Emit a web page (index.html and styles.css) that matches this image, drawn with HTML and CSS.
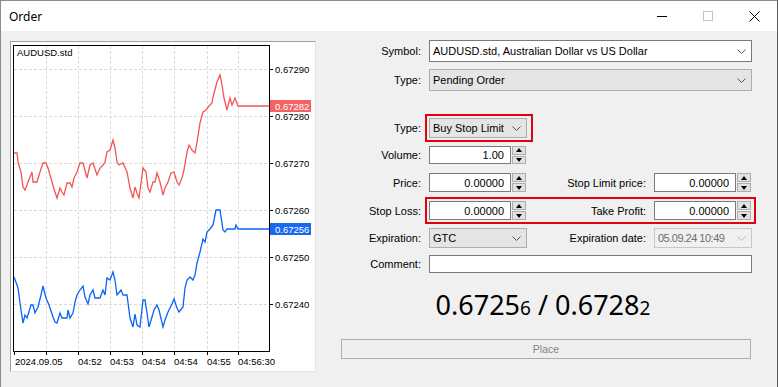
FILE: index.html
```html
<!DOCTYPE html>
<html lang="en">
<head>
    <meta charset="UTF-8">
    <title>Order</title>
    <link rel="stylesheet" href="styles.css">
</head>
<body>
    <div class="window">
        <div class="titlebar">
            <span class="title">Order</span>
            <div class="caption">
                <span><svg width="10" height="10"><line x1="0" y1="5.5" x2="10" y2="5.5" stroke="#000"/></svg></span>
                <span><svg width="10" height="10"><rect x="0.5" y="0.5" width="9" height="9" fill="none" stroke="#c4c4c4"/></svg></span>
                <span><svg width="11" height="11"><path d="M0.5 0.5 L10.5 10.5 M10.5 0.5 L0.5 10.5" stroke="#000" stroke-width="1"/></svg></span>
            </div>
        </div>

        <div class="content">
            <div class="chart">
                <svg width="304" height="329" viewBox="11 42 304 329">
                    <!-- grid -->
                    <g stroke="#dadada" stroke-dasharray="3 2">
                        <line x1="14" y1="69.5" x2="269" y2="69.5"/>
                        <line x1="14" y1="116.5" x2="269" y2="116.5"/>
                        <line x1="14" y1="163.5" x2="269" y2="163.5"/>
                        <line x1="14" y1="210.5" x2="269" y2="210.5"/>
                        <line x1="14" y1="257.5" x2="269" y2="257.5"/>
                        <line x1="14" y1="304.5" x2="269" y2="304.5"/>
                        <line x1="46.5" y1="46" x2="46.5" y2="351"/>
                        <line x1="78.5" y1="46" x2="78.5" y2="351"/>
                        <line x1="110.5" y1="46" x2="110.5" y2="351"/>
                        <line x1="142.5" y1="46" x2="142.5" y2="351"/>
                        <line x1="174.5" y1="46" x2="174.5" y2="351"/>
                        <line x1="207.5" y1="46" x2="207.5" y2="351"/>
                        <line x1="238.5" y1="46" x2="238.5" y2="351"/>
                    </g>

                    <polyline fill="none" stroke="#f45555" stroke-width="1.3" points="14,153 17,153 18,162 21,172 23,187 25,190 27,185 28,182 32,172 33,182 37,182 40,172 43,163 46,163 48,168 52,182 55,192 57,198 60,188 62,192 64,195 67,183 70,183 72,187 74,178 77,172 80,163 83,163 87,178 90,165 93,163 97,175 100,168 103,165 105,162 107,152 110,150 113,140 115,148 117,162 119,165 123,163 127,172 130,188 133,198 135,187 137,193 139,198 143,168 146,172 148,188 150,192 153,182 155,182 157,173 160,182 163,195 165,188 168,182 171,173 174,172 177,182 179,185 182,178 184,170 187,152 189,145 192,150 195,153 197,142 200,123 203,112 206,110 209,106 212,103 213,97 217,82 220,75 222,85 224,98 227,110 230,98 232,105 235,98 238,106 269,106"/>
                    <polyline fill="none" stroke="#0b63f6" stroke-width="1.3" points="14,277 17,285 18,288 21,310 23,323 25,315 27,318 31,305 33,305 35,313 38,307 41,295 43,286 46,298 49,305 53,317 55,322 57,323 60,313 62,318 67,318 68,310 70,318 73,313 75,302 77,295 80,290 83,286 85,297 88,304 90,295 93,290 95,298 100,298 103,290 105,295 107,278 110,280 113,272 115,280 117,295 121,290 123,295 127,295 130,318 133,327 135,314 137,325 140,327 143,300 145,300 147,313 149,327 152,317 154,310 157,305 159,310 163,327 165,320 168,312 172,304 174,299 177,308 179,312 183,307 185,288 187,280 190,277 193,280 195,275 197,263 200,252 203,239 205,242 207,232 210,229 213,225 216,210 220,210 223,230 225,232 227,229 235,229 236,225 238,229 269,229"/>

                    <rect x="13.5" y="45.5" width="256" height="306" fill="none" stroke="#000"/>

                    <!-- axis ticks -->
                    <g stroke="#000">
                        <line x1="269" y1="69.5" x2="273" y2="69.5"/>
                        <line x1="269" y1="116.5" x2="273" y2="116.5"/>
                        <line x1="269" y1="163.5" x2="273" y2="163.5"/>
                        <line x1="269" y1="210.5" x2="273" y2="210.5"/>
                        <line x1="269" y1="257.5" x2="273" y2="257.5"/>
                        <line x1="269" y1="304.5" x2="273" y2="304.5"/>
                        <line x1="14.5" y1="351" x2="14.5" y2="355"/>
                        <line x1="46.5" y1="351" x2="46.5" y2="355"/>
                        <line x1="78.5" y1="351" x2="78.5" y2="355"/>
                        <line x1="110.5" y1="351" x2="110.5" y2="355"/>
                        <line x1="142.5" y1="351" x2="142.5" y2="355"/>
                        <line x1="174.5" y1="351" x2="174.5" y2="355"/>
                        <line x1="207.5" y1="351" x2="207.5" y2="355"/>
                        <line x1="238.5" y1="351" x2="238.5" y2="355"/>
                    </g>

                    <g class="axis-text">
                        <text x="17" y="56">AUDUSD.std</text>
                        <text x="275" y="73">0.67290</text>
                        <text x="275" y="120">0.67280</text>
                        <text x="275" y="167">0.67270</text>
                        <text x="275" y="214">0.67260</text>
                        <text x="275" y="261">0.67250</text>
                        <text x="275" y="308">0.67240</text>
                        <text x="15" y="365">2024.09.05</text>
                        <text x="78" y="365">04:52</text>
                        <text x="110" y="365">04:53</text>
                        <text x="142" y="365">04:54</text>
                        <text x="174" y="365">04:54</text>
                        <text x="207" y="365">04:55</text>
                        <text x="238" y="365">04:56:30</text>
                    </g>

                    <rect x="270" y="100" width="41" height="12" fill="#f26464"/>
                    <text class="axis-text tag" x="275" y="110">0.67282</text>
                    <rect x="270" y="223" width="41" height="12" fill="#1769f2"/>
                    <text class="axis-text tag" x="275" y="233">0.67256</text>
                </svg>
            </div>

            <div class="form">
                <div class="row r-symbol">
                    <span class="lbl">Symbol:</span>
                    <div class="combo white wide">
                        <span>AUDUSD.std, Australian Dollar vs US Dollar</span>
                        <svg class="chev" width="9" height="5"><polyline points="0.5,0.5 4.5,4.5 8.5,0.5" fill="none" stroke="#555"/></svg>
                    </div>
                </div>
                <div class="row r-type">
                    <span class="lbl">Type:</span>
                    <div class="combo wide">
                        <span>Pending Order</span>
                        <svg class="chev" width="9" height="5"><polyline points="0.5,0.5 4.5,4.5 8.5,0.5" fill="none" stroke="#555"/></svg>
                    </div>
                </div>
                <div class="row r-type2">
                    <span class="lbl">Type:</span>
                    <div class="marked single">
                        <div class="combo">
                            <span>Buy Stop Limit</span>
                            <svg class="chev" width="9" height="5"><polyline points="0.5,0.5 4.5,4.5 8.5,0.5" fill="none" stroke="#555"/></svg>
                        </div>
                    </div>
                </div>
                <div class="row r-volume">
                    <span class="lbl">Volume:</span>
                    <div class="field">
                        <span class="num">1.00</span>
                        <span class="spin"><i class="up"></i><i class="down"></i></span>
                    </div>
                </div>
                <div class="row r-price">
                    <span class="lbl">Price:</span>
                    <div class="field">
                        <span class="num">0.00000</span>
                        <span class="spin"><i class="up"></i><i class="down"></i></span>
                    </div>
                    <span class="lbl2">Stop Limit price:</span>
                    <div class="field">
                        <span class="num">0.00000</span>
                        <span class="spin"><i class="up"></i><i class="down"></i></span>
                    </div>
                </div>
                <div class="row r-stops">
                    <span class="lbl">Stop Loss:</span>
                    <div class="marked">
                        <div class="field">
                            <span class="num">0.00000</span>
                            <span class="spin"><i class="up"></i><i class="down"></i></span>
                        </div>
                        <span class="lbl2">Take Profit:</span>
                        <div class="field">
                            <span class="num">0.00000</span>
                            <span class="spin"><i class="up"></i><i class="down"></i></span>
                        </div>
                    </div>
                </div>
                <div class="row r-expiry">
                    <span class="lbl">Expiration:</span>
                    <div class="combo">
                        <span>GTC</span>
                        <svg class="chev" width="9" height="5"><polyline points="0.5,0.5 4.5,4.5 8.5,0.5" fill="none" stroke="#555"/></svg>
                    </div>
                    <span class="lbl2">Expiration date:</span>
                    <div class="combo disabled">
                        <span>05.09.24 10:49</span>
                        <svg class="chev" width="9" height="5"><polyline points="0.5,0.5 4.5,4.5 8.5,0.5" fill="none" stroke="#b8b8b8"/></svg>
                    </div>
                </div>
                <div class="row r-comment">
                    <span class="lbl">Comment:</span>
                    <div class="text-box"></div>
                </div>

                <div class="quote">0.6725<span class="small">6</span> / 0.6728<span class="small">2</span></div>

                <button class="place" disabled>Place</button>
            </div>
        </div>
    </div>
</body>
</html>
```

FILE: styles.css
```css
html, body {
    margin: 0;
    padding: 0;
}
body {
    width: 778px;
    height: 387px;
    overflow: hidden;
    font-family: "Liberation Sans", Arial, sans-serif;
    font-size: 11px;
    color: #000;
}
.window {
    box-sizing: border-box;
    width: 778px;
    height: 387px;
    border: 1px solid #8c8c8c;
    border-right-color: #5a5a5a;
    border-bottom: none;
    background: #f0f0f0;
    display: flex;
    flex-direction: column;
}
.titlebar {
    height: 30px;
    flex: none;
    background: #fff;
    display: flex;
    align-items: center;
}
.title {
    font-family: "Noto Sans", sans-serif;
    font-size: 12px;
    margin-left: 8px;
}
.caption {
    margin-left: auto;
    display: flex;
    height: 100%;
}
.caption span {
    width: 46px;
    display: flex;
    align-items: center;
    justify-content: center;
}
.caption svg {
    display: block;
}
.content {
    display: flex;
    align-items: flex-start;
    padding: 9px 0 0 9px;
}
.chart {
    margin-top: 1px;
    width: 306px;
    height: 331px;
    box-sizing: border-box;
    border: 1px solid;
    border-color: #a0a0a0 #e2e2e2 #e2e2e2 #a0a0a0;
    background: #fff;
}
.chart svg {
    display: block;
}
.axis-text {
    font-family: "Liberation Sans", Arial, sans-serif;
    font-size: 9.5px;
    fill: #000;
}
.tag {
    fill: #fff;
}

/* form */
.form {
    margin-left: 24px;
    width: 412px;
}
.row {
    display: flex;
    align-items: center;
}
.lbl {
    width: 81px;
    margin-right: 8px;
    text-align: right;
    flex: none;
}
.lbl2 {
    width: 119px;
    margin-right: 8px;
    text-align: right;
    flex: none;
}
.r-symbol { height: 22px; margin-bottom: 7px; }
.r-type { height: 22px; margin-bottom: 27px; }
.r-type2 { height: 20px; margin-bottom: 8px; }
.r-volume { height: 18px; margin-bottom: 9px; }
.r-price { height: 19px; margin-bottom: 9px; }
.r-stops { height: 19px; margin-bottom: 8px; }
.r-expiry { height: 20px; margin-bottom: 7px; }
.r-comment { height: 18px; }

.combo {
    box-sizing: border-box;
    width: 98px;
    height: 100%;
    display: flex;
    align-items: center;
    justify-content: space-between;
    padding: 0 5px 0 3px;
    background: #e5e5e5;
    border: 1px solid #adadad;
    white-space: nowrap;
}
.combo.white {
    background: #fff;
    border-color: #7a7a7a;
}
.combo.wide {
    width: 323px;
}
.combo.disabled {
    background: #f0f0f0;
    border-color: #c8c8c8;
    color: #6d6d6d;
    letter-spacing: -0.5px;
}
.chev {
    display: block;
    flex: none;
}
.marked {
    display: flex;
    align-items: center;
    height: 100%;
    outline: 2px solid #e3000f;
    outline-offset: 2px;
}
.marked.single {
    width: 100px;
}
.field {
    display: flex;
    width: 98px;
    height: 100%;
    flex: none;
}
.num {
    box-sizing: border-box;
    width: 82px;
    height: 100%;
    display: flex;
    align-items: center;
    justify-content: flex-end;
    padding-right: 6px;
    background: #fff;
    border: 1px solid #7a7a7a;
}
.spin {
    display: flex;
    flex-direction: column;
    gap: 1px;
    width: 14px;
    height: 100%;
    margin-left: 1px;
}
.spin i {
    flex: 1;
    box-sizing: border-box;
    background: #e1e1e1;
    border: 1px solid #adadad;
    display: flex;
    align-items: center;
    justify-content: center;
}
.spin i.up::after {
    content: "";
    border-left: 3.5px solid transparent;
    border-right: 3.5px solid transparent;
    border-bottom: 4px solid #000;
}
.spin i.down::after {
    content: "";
    border-left: 3.5px solid transparent;
    border-right: 3.5px solid transparent;
    border-top: 4px solid #000;
}
.text-box {
    box-sizing: border-box;
    width: 323px;
    height: 100%;
    background: #fff;
    border: 1px solid #7a7a7a;
}
.quote {
    margin-top: 12px;
    height: 40px;
    line-height: 40px;
    padding-right: 6px;
    text-align: center;
    font-family: "Noto Sans", sans-serif;
    font-size: 27px;
    color: #000;
}
.quote .small {
    font-size: 19px;
}
.place {
    display: block;
    margin: 14px 0 0 1px;
    width: 410px;
    height: 20px;
    padding: 0;
    background: #efefef;
    border: 1px solid #adadad;
    font-family: "Liberation Sans", Arial, sans-serif;
    font-size: 10.5px;
    color: #838383;
}
```
